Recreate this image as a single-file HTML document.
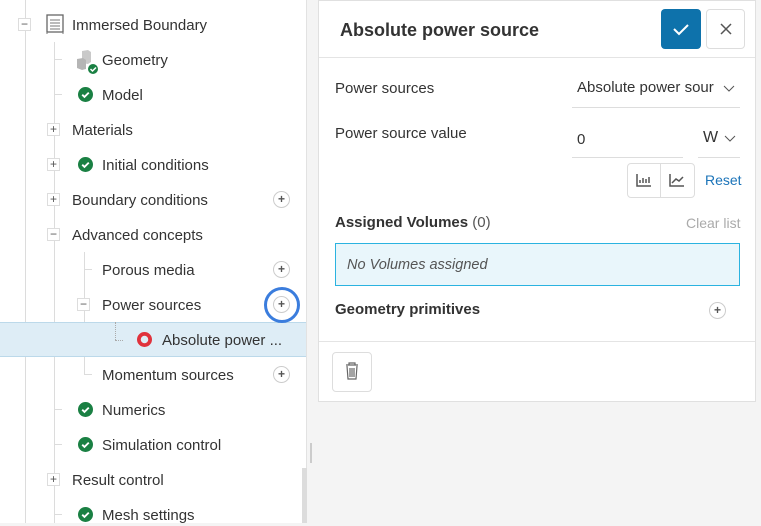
<!DOCTYPE html>
<html><head><style>
*{margin:0;padding:0;box-sizing:border-box}
body{width:761px;height:523px;overflow:hidden;background:#f4f4f4;font-family:"Liberation Sans",sans-serif;color:#333;position:relative}
.abs{position:absolute}
#left{left:0;top:0;width:307px;height:523px;background:#fff;border-right:1px solid #e2e2e2}
.t{position:absolute;font-size:15px;line-height:20px;white-space:nowrap}
#left .t{margin-top:2px}
.vl{position:absolute;width:1px;background:#dcdcdc}
.hl{position:absolute;height:1px;background:#dcdcdc}
.ex{position:absolute;width:13px;height:13px;border:1px solid #ddd;background:#fff;font-size:12px;line-height:11px;text-align:center;color:#555}
.pc{position:absolute;width:17px;height:17px;border:1px solid #ccc;border-radius:50%;background:#fff;font-size:12px;line-height:15px;text-align:center;color:#555;font-weight:bold}
.ck{position:absolute;width:15px;height:15px}
</style></head><body>
<div id="left" class="abs">
<div class="vl" style="left:25px;top:0;height:523px"></div>
<div class="vl" style="left:54px;top:42px;height:481px"></div>
<div class="vl" style="left:84px;top:252px;height:122px"></div>
<div class="hl" style="left:54px;top:59px;width:8px"></div>
<div class="hl" style="left:54px;top:94px;width:8px"></div>
<div class="hl" style="left:84px;top:269px;width:8px"></div>
<div class="hl" style="left:84px;top:374px;width:8px"></div>
<div class="hl" style="left:54px;top:409px;width:8px"></div>
<div class="hl" style="left:54px;top:444px;width:8px"></div>
<div class="hl" style="left:54px;top:514px;width:8px"></div>
<div class="abs" style="left:0;top:322px;width:306px;height:35px;background:#deedf6;border-top:1px solid #bcd9ea;border-bottom:1px solid #bcd9ea"></div>
<div class="abs" style="left:115px;top:322px;width:1px;height:18px;border-left:1px dotted #aaa"></div>
<div class="abs" style="left:115px;top:340px;width:8px;height:1px;border-top:1px dotted #aaa"></div>

<div class="ex" style="left:18px;top:18px">−</div>
<svg class="abs" style="left:46px;top:14px" width="18" height="20" viewBox="0 0 18 20"><rect x="1" y="1" width="16" height="17" fill="none" stroke="#666" stroke-width="1.3"/><path d="M1 18v2M17 18v2M4 6h10M4 9h10M4 12h10M4 15h10" stroke="#777" stroke-width="1"/></svg>
<div class="t" style="left:72px;top:14px">Immersed Boundary</div>

<svg class="abs" style="left:76px;top:49px" width="24" height="26" viewBox="0 0 24 26"><path d="M6 2l6-1 3 2v10l-3 2-6-1z" fill="#c9c9c9"/><path d="M1 10l6-1 3 2v9l-4 1-5-2z" fill="#b5b5b5"/><circle cx="17" cy="20" r="5" fill="#1a8043"/><path d="M14.5 20l2 2 3.5-3.5" stroke="#fff" stroke-width="1.5" fill="none"/></svg>
<div class="t" style="left:102px;top:49px">Geometry</div>

<svg class="ck" style="left:78px;top:87px" viewBox="0 0 16 16"><circle cx="8" cy="8" r="8" fill="#1a8043"/><path d="M4.5 8.2l2.4 2.4 4.6-4.6" stroke="#fff" stroke-width="2" fill="none"/></svg>
<div class="t" style="left:102px;top:84px">Model</div>

<div class="ex" style="left:47px;top:123px">+</div>
<div class="t" style="left:72px;top:119px">Materials</div>

<div class="ex" style="left:47px;top:158px">+</div>
<svg class="ck" style="left:78px;top:157px" viewBox="0 0 16 16"><circle cx="8" cy="8" r="8" fill="#1a8043"/><path d="M4.5 8.2l2.4 2.4 4.6-4.6" stroke="#fff" stroke-width="2" fill="none"/></svg>
<div class="t" style="left:102px;top:154px">Initial conditions</div>

<div class="ex" style="left:47px;top:193px">+</div>
<div class="t" style="left:72px;top:189px">Boundary conditions</div>
<div class="pc" style="left:273px;top:191px">+</div>

<div class="ex" style="left:47px;top:228px">−</div>
<div class="t" style="left:72px;top:224px">Advanced concepts</div>

<div class="t" style="left:102px;top:259px">Porous media</div>
<div class="pc" style="left:273px;top:261px">+</div>

<div class="ex" style="left:77px;top:298px">−</div>
<div class="t" style="left:102px;top:294px">Power sources</div>
<div class="pc" style="left:273px;top:296px">+</div>
<div class="abs" style="left:264px;top:287px;width:36px;height:36px;border:3px solid #3b7ddd;border-radius:50%"></div>

<svg class="ck" style="left:137px;top:332px" viewBox="0 0 16 16"><circle cx="8" cy="8" r="6" fill="none" stroke="#e0323c" stroke-width="4"/></svg>
<div class="t" style="left:162px;top:329px">Absolute power ...</div>

<div class="t" style="left:102px;top:364px">Momentum sources</div>
<div class="pc" style="left:273px;top:366px">+</div>

<svg class="ck" style="left:78px;top:402px" viewBox="0 0 16 16"><circle cx="8" cy="8" r="8" fill="#1a8043"/><path d="M4.5 8.2l2.4 2.4 4.6-4.6" stroke="#fff" stroke-width="2" fill="none"/></svg>
<div class="t" style="left:102px;top:399px">Numerics</div>
<svg class="ck" style="left:78px;top:437px" viewBox="0 0 16 16"><circle cx="8" cy="8" r="8" fill="#1a8043"/><path d="M4.5 8.2l2.4 2.4 4.6-4.6" stroke="#fff" stroke-width="2" fill="none"/></svg>
<div class="t" style="left:102px;top:434px">Simulation control</div>
<div class="ex" style="left:47px;top:473px">+</div>
<div class="t" style="left:72px;top:469px">Result control</div>
<svg class="ck" style="left:78px;top:507px" viewBox="0 0 16 16"><circle cx="8" cy="8" r="8" fill="#1a8043"/><path d="M4.5 8.2l2.4 2.4 4.6-4.6" stroke="#fff" stroke-width="2" fill="none"/></svg>
<div class="t" style="left:102px;top:504px">Mesh settings</div>
<div class="abs" style="left:302px;top:468px;width:5px;height:55px;background:#dcdcdc"></div>
</div>
<div class="abs" style="left:310px;top:443px;width:2px;height:20px;border-left:1px solid #ccc;border-right:1px solid #ccc"></div>

<div class="abs" style="left:318px;top:0;width:438px;height:402px;background:#fff;border:1px solid #e0e0e0">
<div class="abs" style="left:0;top:56px;width:436px;height:1px;background:#e4e4e4"></div>
<div class="t" style="left:21px;top:18px;font-size:18px;font-weight:bold;line-height:22px;color:#333">Absolute power source</div>
<div class="abs" style="left:342px;top:8px;width:40px;height:40px;background:#0e72ab;border-radius:4px"><svg width="40" height="40"><path d="M13 20l5 5 9-9" stroke="#fff" stroke-width="2" fill="none"/></svg></div>
<div class="abs" style="left:387px;top:8px;width:39px;height:40px;border:1px solid #ddd;border-radius:4px"><svg width="37" height="38"><path d="M14 14l10 10M24 14l-10 10" stroke="#555" stroke-width="1.5"/></svg></div>

<div class="t" style="left:16px;top:78px">Power sources</div>
<div class="t" style="left:258px;top:77px;width:142px;overflow:hidden">Absolute power sour</div>
<svg class="abs" style="left:404px;top:82px" width="12" height="10"><path d="M1 3l5 5 5-5" stroke="#555" fill="none"/></svg>
<div class="abs" style="left:253px;top:106px;width:168px;height:1px;background:#ddd"></div>

<div class="t" style="left:16px;top:123px">Power source value</div>
<div class="t" style="left:258px;top:129px">0</div>
<div class="abs" style="left:253px;top:156px;width:111px;height:1px;background:#ddd"></div>
<div class="t" style="left:384px;top:127px;font-size:16px">W</div>
<svg class="abs" style="left:405px;top:132px" width="12" height="10"><path d="M1 3l5 5 5-5" stroke="#555" fill="none"/></svg>
<div class="abs" style="left:379px;top:156px;width:42px;height:1px;background:#ddd"></div>

<div class="abs" style="left:308px;top:162px;width:68px;height:35px;border:1px solid #ddd;border-radius:4px"></div>
<div class="abs" style="left:341px;top:163px;width:1px;height:33px;background:#ddd"></div>
<svg class="abs" style="left:317px;top:171px" width="16" height="16"><path d="M1 2v12h14M4 11v-3M7 11v-5M10 11v-4M13 11v-6" stroke="#555" stroke-width="1.5" fill="none"/></svg>
<svg class="abs" style="left:350px;top:171px" width="16" height="16"><path d="M1 2v12h14M3 11l4-4 3 2 4-4" stroke="#555" stroke-width="1.5" fill="none"/></svg>
<div class="t" style="left:386px;top:169px;color:#1c74b9;font-size:14px">Reset</div>

<div class="t" style="left:16px;top:212px;font-weight:bold">Assigned Volumes <span style="font-weight:normal;color:#555">(0)</span></div>
<div class="t" style="left:367px;top:212px;color:#aaa;font-size:14px">Clear list</div>
<div class="abs" style="left:16px;top:242px;width:405px;height:43px;background:#e9f6fb;border:1px solid #2bb3e0"></div>
<div class="t" style="left:28px;top:254px;font-style:italic;color:#555;font-size:14.5px">No Volumes assigned</div>

<div class="t" style="left:16px;top:299px;font-weight:bold">Geometry primitives</div>
<div class="pc" style="left:390px;top:301px">+</div>
<div class="abs" style="left:0;top:340px;width:436px;height:1px;background:#e4e4e4"></div>
<div class="abs" style="left:13px;top:351px;width:40px;height:40px;border:1px solid #ddd;border-radius:4px"><svg width="38" height="38"><path d="M13 12h12M16 12v-2h6v2M14 13l1 13h8l1-13M17 15v9M19 15v9M21 15v9" stroke="#666" stroke-width="1.2" fill="none"/></svg></div>
</div>
</body></html>
